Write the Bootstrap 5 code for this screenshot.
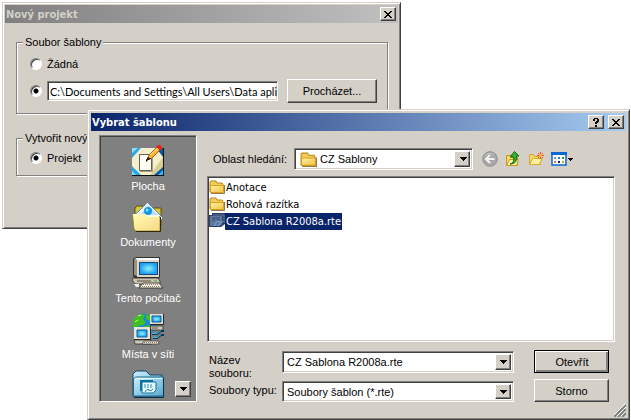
<!DOCTYPE html>
<html lang="cs">
<head>
<meta charset="utf-8">
<meta name="viewport" content="width=device-width, initial-scale=1">
<title>Vybrat šablonu</title>
<link href="https://cdn.jsdelivr.net/npm/bootstrap@5.3.0/dist/css/bootstrap.min.css" rel="stylesheet">
<style>
:root{--face:#d4d0c8;--shade:#808080;--dark:#404040;--navy:#0a246a}
body{background:#fff;color:#000;font:11px/14px "Liberation Sans",Arial,sans-serif}
.desktop{min-height:420px;padding:2px}
.win{background:var(--face);border:1px solid;border-color:var(--face) var(--dark) var(--dark) var(--face);box-shadow:inset 1px 1px #fff,inset -1px -1px var(--shade)}
.win-back{width:399px;max-width:100%;padding:2px 2px 52px}
.win-front{left:87px;right:1px;top:109px;padding:3px 3px 2px}
.titlebar{height:18px;padding:0 2px 0 1px;font:bold 11px/17px "DejaVu Sans Condensed","DejaVu Sans",sans-serif}
.win-back .titlebar{background:linear-gradient(90deg,#808080,#c0c0c0);color:var(--face)}
.win-front .titlebar{background:linear-gradient(90deg,#0a246a,#a6caf0);color:#fff}
.titlebar h1{font:inherit}
.face-btn{background:var(--face);color:#000;border:1px solid;border-color:#fff var(--dark) var(--dark) #fff;box-shadow:inset -1px -1px var(--shade);padding:0}
.cap-btn{width:16px;height:14px}
.push{height:24px;width:90px}
.group{border:1px solid var(--shade);box-shadow:1px 1px #fff,inset 1px 1px #fff;margin:0 10px 0 11px;padding:8px 10px 10px 13px}
.group legend{float:none;width:auto;font:inherit;line-height:14px;margin:0 0 0 -7px;padding:0 2px;background:var(--face)}
.group-file{margin-top:12px}
.group-new{margin-top:17px;padding-top:6px}
.radio-row{gap:5px;line-height:14px}
.radio-row .form-check-input{width:12px;height:12px;margin:0;border:1px solid;border-color:#808080 #fff #fff #808080;background-color:#fff;background-image:none;box-shadow:inset 1px 1px #404040;flex:none}
.radio-row .form-check-input:checked{background-image:radial-gradient(circle,#000 2px,transparent 3px)}
.sunken{background:#fff;border:1px solid;border-color:var(--shade) #fff #fff var(--shade);box-shadow:inset 1px 1px var(--dark),inset -1px -1px var(--face);border-radius:0;color:#000}
.path-box{height:20px;padding:0 0 0 2px;font:11px/14px Lato,"Liberation Sans",sans-serif;min-width:0;outline:0}
.places{width:98px;flex:none;background:var(--shade);border:1px solid;border-color:var(--shade) #fff #fff var(--shade);box-shadow:inset 1px 1px var(--dark);padding:9px 0 0;color:#fff}
.places a{color:#fff;line-height:14px;gap:2px;margin-bottom:8px}
.places a:last-of-type{margin-bottom:0}
.last-place{height:32px}
.scroll-down{width:16px;height:16px;right:5px;bottom:4px}
.dialog-body{padding:4px 11px 0 8px;gap:10px}
.look-in{margin-top:13px;padding-left:6px}
.look-in label{width:81px}
.combo{height:22px;padding:2px}
.combo select{appearance:none;border:0;outline:0;background:transparent;font:inherit;color:#000;padding:0 2px;min-width:0}
.combo-arrow{width:16px;flex:none}
.look-combo{flex:0 1 179px}
.look-combo svg{margin:0 1px 0 3px}
.tool{border:0;background:none;padding:0;line-height:0}
.tools{gap:7px;margin-left:9px}
.files{margin-top:6px;height:166px;padding:2px 1px 1px;font-family:"DejaVu Sans Condensed","DejaVu Sans",sans-serif}
.files li{height:17px;line-height:17px}
.files .caption{padding:0 1px}
.files .chosen{background:var(--navy);color:#fff}
.file-form{margin-top:8px;padding:0 6px 0 2px;gap:20px}
.fields{display:grid;grid-template-columns:73px minmax(0,1fr);grid-template-rows:30px 21px;padding-top:1px}
.fields label{line-height:13px;padding-top:3px}
.fields .combo{width:100%}
.fields div:last-child{height:21px}
.actions{gap:6px;width:75px}
.actions .push{width:100%;height:23px}
.actions .main-push{outline:1px solid #000;outline-offset:-1px;border-width:2px 1px 1px 2px;box-shadow:inset -2px -2px var(--shade)}
.grip{height:15px;padding-top:2px}
svg{display:block;flex:none}
</style>
<script src="https://cdn.jsdelivr.net/npm/bootstrap@5.3.0/dist/js/bootstrap.bundle.min.js"></script>
</head>
<body>
<svg width="0" height="0" class="position-absolute" aria-hidden="true">
<defs>
<linearGradient id="gold" x2="1" y2="1"><stop offset="0" stop-color="#fff5a8"/><stop offset="1" stop-color="#f0be40"/></linearGradient>
<linearGradient id="paperfold" x2="1" y2="1"><stop offset="0" stop-color="#fffcb0"/><stop offset="1" stop-color="#f8d888"/></linearGradient>
<linearGradient id="ice" x2="1" y2="1"><stop offset="0" stop-color="#cdf0fc"/><stop offset="1" stop-color="#58a8d0"/></linearGradient>
<radialGradient id="screen"><stop offset="0" stop-color="#8cf4ff"/><stop offset="1" stop-color="#20a0f0"/></radialGradient>
<symbol id="folder" viewBox="0 0 16 16"><path d="M1 13V3l1-1h5l1 2h5l1 1v8z" fill="#f4cf58" stroke="#b88518"/><path d="M1.500 13.500V6.500h13v7z" fill="url(#gold)" stroke="#d8a020"/><path d="M2 14.500h13.500V6" fill="none" stroke="#8c7a50"/></symbol>
<symbol id="down" viewBox="0 0 7 4"><path d="M0 0h7v1H6v1H5v1H4v1H3V3H2V2H1V1H0z"/></symbol>
<symbol id="close" viewBox="0 0 8 7"><path d="M0 0h2v1h1v1h2V1h1V0h2v1H7v1H6v1H5v1h1v1h1v1h1v1H6V6H5V5H3v1H2v1H0V6h1V5h1V4h1V3H2V2H1V1H0z"/></symbol>
</defs>
</svg>

<main class="desktop position-relative">
  <section class="win win-back" aria-label="Nový projekt">
    <header class="titlebar d-flex align-items-center justify-content-between">
      <h1 class="m-0">Nový projekt</h1>
      <button type="button" class="face-btn cap-btn d-flex align-items-center justify-content-center" aria-label="Zavřít"><svg width="8" height="7"><use href="#close"/></svg></button>
    </header>
    <form>
      <fieldset class="group group-file">
        <legend>Soubor šablony</legend>
        <div class="radio-row d-flex align-items-center mb-2">
          <input class="form-check-input" type="radio" name="template" id="none"><label for="none">Žádná</label>
        </div>
        <div class="radio-row d-flex align-items-center">
          <input class="form-check-input" type="radio" name="template" id="from-file" checked aria-label="Ze souboru">
          <input class="path-box sunken flex-fill" type="text" aria-label="Cesta k šabloně" value="C:\Documents and Settings\All Users\Data apli">
          <button type="button" class="face-btn push ms-1">Procházet...</button>
        </div>
      </fieldset>
      <fieldset class="group group-new">
        <legend>Vytvořit nový</legend>
        <div class="radio-row d-flex align-items-center">
          <input class="form-check-input" type="radio" name="kind" id="project" checked><label for="project">Projekt</label>
        </div>
      </fieldset>
    </form>
  </section>

  <section class="win win-front position-absolute" aria-label="Vybrat šablonu">
    <header class="titlebar d-flex align-items-center">
      <h1 class="m-0 me-auto">Vybrat šablonu</h1>
      <button type="button" class="face-btn cap-btn d-flex align-items-center justify-content-center me-1" aria-label="Nápověda"><svg width="6" height="9" viewBox="0 0 6 9"><path d="M1 0h4v1h1v3H5v1H4v1H2V4h1V3h1V1H2v2H0V1h1zM2 7h2v2H2z"/></svg></button>
      <button type="button" class="face-btn cap-btn d-flex align-items-center justify-content-center" aria-label="Zavřít"><svg width="8" height="7"><use href="#close"/></svg></button>
    </header>

    <div class="dialog-body d-flex">
      <nav class="places position-relative overflow-hidden" aria-label="Místa">
        <a href="#" class="d-flex flex-column align-items-center text-decoration-none">
          <svg width="32" height="32" viewBox="0 0 32 32"><path d="M0 3h32v28H0z" fill="#101010"/><path d="M0 3h31v27H0z" fill="#f4efc8"/><path d="M18 30L31 12v18z" fill="#d8cf98"/><path d="M0 3h9L0 13zM0 21l9 9H0z" fill="#28a8e8"/><path d="M0 3h6L0 8zM0 26l4 4H0z" fill="#88e0ff"/><path d="M24 3h7v9zM31 22v8h-9z" fill="#0858a8"/><path d="M31 25v5h-5z" fill="#30b8f0"/><path d="M7.500 9.500h12v16h-12z" fill="#fffef0" stroke="#606060"/><path d="M8 26.500h12.500V11" fill="none" stroke="#a8a078"/><path d="M15 15l2-5 8-8 3 3-8 8z" fill="#ffb030" stroke="#804000" stroke-width=".7"/><path d="M18 10l8-7" stroke="#fff080"/><path d="M24 2l2-2h2l2 2v2l-2 1z" fill="#e02820"/><path d="M14 17v-2l2-3 3 2-3 1z" fill="#181000"/></svg>
          <span>Plocha</span>
        </a>
        <a href="#" class="d-flex flex-column align-items-center text-decoration-none">
          <svg width="32" height="32" viewBox="0 0 32 32"><path d="M3 14V7l2-2h6l2 2h16v18z" fill="#d8c838" stroke="#605000"/><path d="M15.500 1.500L31 17l-6 6L4 13z" fill="#eef8ff" stroke="#6888b8"/><path d="M16 4l10 10H8z" fill="#b8dcf8"/><circle cx="16" cy="10" r="4" fill="#1898e0"/><circle cx="15" cy="9" r="1.500" fill="#80e0ff"/><path d="M.5 13.500h13l2 2H28V30H4l-2-2z" fill="url(#paperfold)" stroke="#908000" stroke-width=".7"/><path d="M1 13.500h12.500l2 2H27" fill="none" stroke="#ffffd8"/><path d="M4 30.500h24.500V16" fill="none" stroke="#302800"/></svg>
          <span>Dokumenty</span>
        </a>
        <a href="#" class="d-flex flex-column align-items-center text-decoration-none">
          <svg width="32" height="32" viewBox="0 0 32 32"><path d="M1 2l3-2h24v20l-2 2H4l-3-3z" fill="#303030"/><path d="M2 2h3v17l-3-1z" fill="#989080"/><path d="M3 1h24v2H5z" fill="#fff"/><path d="M5 3h22v17H5z" fill="#dcd8cc"/><path d="M7 5h19v13H7z" fill="#184878"/><path d="M8 6h17v11H8z" fill="url(#screen)"/><path d="M1 21h25l2 3v3H3l-3-4z" fill="#c8c0b0" stroke="#302820" stroke-width=".8"/><path d="M5 24h14" stroke="#585040"/><path d="M22 24h3" stroke="#18c030"/><path d="M2 27h5v3H4z" fill="#eee"/><path d="M11 26h16l4 5H7z" fill="#f0ece0" stroke="#302820" stroke-width=".8"/><path d="M11 27.500h16M10 29.500h18" stroke="#888070" stroke-dasharray="1 1"/></svg>
          <span>Tento počítač</span>
        </a>
        <a href="#" class="d-flex flex-column align-items-center text-decoration-none">
          <svg width="32" height="32" viewBox="0 0 32 32"><circle cx="12" cy="12" r="11.500" fill="#1888d8"/><path d="M3 4l6-3 4 1-2 4 3 3-4 4-3-1-2 4-4-2V8zM14 1l5 2-1 5-4-2zM12 13l6-1 3 4-3 5-6-4z" fill="#40c020"/><path d="M6 3l3-1M3 9l3-2" stroke="#c0ff80"/><path d="M18 1h14v11H18z" fill="#282828"/><path d="M18 1h13v10H18z" fill="#e0dcd0"/><path d="M20 3h9v6h-9z" fill="url(#screen)" stroke="#1060a0"/><path d="M18 13h13v4H18z" fill="#d0c8b8" stroke="#303030" stroke-width=".8"/><path d="M20 15h6" stroke="#605848"/><path d="M20 21h5l4-3h3M21 25h4l4-3h3" fill="none" stroke="#083850" stroke-width="2"/><path d="M20 20.500h5l4-3M21 24.500h4l4-3" fill="none" stroke="#48b8e0"/><path d="M2 14h17v13H2z" fill="#282828"/><path d="M2 14h16v12H2z" fill="#e8e4d8"/><path d="M5 17h10v7H5z" fill="url(#screen)" stroke="#1060a0"/><path d="M2 27h17l1 4H3z" fill="#d0c8b8" stroke="#303030" stroke-width=".8"/><path d="M12 28h14l1 3H10z" fill="#f0ece0" stroke="#403830" stroke-width=".7"/><path d="M12 29.500h13" stroke="#807868" stroke-dasharray="1 1"/></svg>
          <span>Místa v síti</span>
        </a>
        <a href="#" class="last-place d-flex flex-column align-items-center" aria-label="Šablony">
          <svg width="32" height="32" viewBox="0 0 32 32"><path d="M1 27V5l3-3h10l4 4h12v21z" fill="url(#ice)" stroke="#104868"/><path d="M1.500 26V10l2-2h28v19H1.500z" fill="url(#ice)" stroke="#186890"/><path d="M3 9.500h27" stroke="#e8fcff"/><path d="M2 28.500h29.500V9" fill="none" stroke="#083048"/><path d="M8 11h13v11H8z" fill="#1070a0"/><path d="M10 13h14v8l-3 3H10z" fill="#e4f8ff" stroke="#1070a0"/><path d="M12 16h9M12 18h9" stroke="#3890b8" stroke-dasharray="2 1"/><path d="M13 23q2-4 4-2t4-1" stroke="#2080b0" fill="none"/></svg>
        </a>
        <button type="button" class="scroll-down face-btn position-absolute d-flex align-items-center justify-content-center" aria-label="Dolů"><svg width="7" height="4"><use href="#down"/></svg></button>
      </nav>

      <div class="flex-fill">
        <div class="look-in d-flex align-items-center">
          <label for="look">Oblast hledání:</label>
          <div class="combo look-combo sunken d-flex align-items-center">
            <svg width="17" height="17"><use href="#folder"/></svg>
            <select id="look" class="flex-fill"><option>CZ Sablony</option></select>
            <span class="combo-arrow face-btn align-self-stretch d-flex align-items-center justify-content-center"><svg width="7" height="4"><use href="#down"/></svg></span>
          </div>
          <div class="tools d-flex align-items-center">
            <button type="button" class="tool" aria-label="Zpět"><svg width="16" height="16" viewBox="0 0 16 16"><circle cx="8" cy="8" r="7.300" fill="#a8a8a8" stroke="#909090"/><path d="M3 5a6 6 0 0 1 9-1" fill="none" stroke="#c8c8c8"/><path d="M12.500 8H4.500M8 4L4 8l4 4" fill="none" stroke="#f4f4f4" stroke-width="2"/></svg></button>
            <button type="button" class="tool" aria-label="O úroveň výš"><svg width="16" height="16" viewBox="0 0 16 16"><path d="M1.500 14.500v-10h4l1 2h6v8z" fill="#f8dc68" stroke="#c89820"/><path d="M1.500 14.500l3-6h9l-2 6z" fill="#fff0a0" stroke="#c89820"/><path d="M5 13c4-1 4-4 3.500-7H5l4.500-5.500L14 5h-2.500C12 9 11 13 5 13z" fill="#38b030" stroke="#106810"/></svg></button>
            <button type="button" class="tool" aria-label="Nová složka"><svg width="16" height="16" viewBox="0 0 16 16"><path d="M1.500 13.500v-10h4l1 2h6v8z" fill="#f8dc68" stroke="#d8a830"/><path d="M1.500 13.500l3-6h9.500l-2.500 6z" fill="#fff0a0" stroke="#d8a830"/><path d="M12.500 1v7M9 4.500h7M10 2l5 5M15 2l-5 5" stroke="#f05020"/><circle cx="12.500" cy="4.500" r="1.500" fill="#ffd060"/></svg></button>
            <button type="button" class="tool" aria-label="Zobrazení"><svg width="23" height="16" viewBox="0 0 23 16"><path d="M1 2h14v12H1z" fill="#fff" stroke="#0868d0" stroke-width="1.500"/><path d="M0 1h16v3H0z" fill="#0868d0"/><path d="M3 6h2v2H3z" fill="#9090c0"/><path d="M7 6h2v2H7z" fill="#3078d0"/><path d="M11 6h2v2h-2z" fill="#20a030"/><path d="M3 10h2v2H3z" fill="#f07050"/><path d="M7 10h2v2H7z" fill="#102080"/><path d="M11 10h2v2h-2z" fill="#c8a010"/><path d="M17 7h5v1h-1v1h-1v1h-1V9h-1V8h-1z"/></svg></button>
          </div>
        </div>

        <ul class="files sunken list-unstyled mb-0">
          <li class="d-flex"><svg width="16" height="16"><use href="#folder"/></svg><span class="caption">Anotace</span></li>
          <li class="d-flex"><svg width="16" height="16"><use href="#folder"/></svg><span class="caption">Rohová razítka</span></li>
          <li class="d-flex"><svg width="16" height="16" viewBox="0 0 16 16"><path d="M0 2h3V0h13v11l-4 3H0z" fill="#303f68"/><path d="M1 3h12v8l-3 2H1z" fill="#6078a0"/><path d="M4 2h11v8" fill="none" stroke="#6878a0"/><path d="M3 5h8M3 7h3M8 7h3" stroke="#304878"/><path d="M6 13c0-5 5-6 6-3l2-2M9 13c0-2 2-3 3-1" stroke="#78b0d8" fill="none"/></svg><span class="caption chosen">CZ Sablona R2008a.rte</span></li>
        </ul>

        <form class="file-form d-flex">
          <div class="fields flex-fill">
            <label for="fname">Název<br>souboru:</label>
            <div class="combo sunken d-flex align-items-center">
              <select id="fname" class="flex-fill"><option>CZ Sablona R2008a.rte</option></select>
              <span class="combo-arrow face-btn align-self-stretch d-flex align-items-center justify-content-center"><svg width="7" height="4"><use href="#down"/></svg></span>
            </div>
            <label for="ftype">Soubory typu:</label>
            <div class="combo sunken d-flex align-items-center">
              <select id="ftype" class="flex-fill"><option>Soubory šablon (*.rte)</option></select>
              <span class="combo-arrow face-btn align-self-stretch d-flex align-items-center justify-content-center"><svg width="7" height="4"><use href="#down"/></svg></span>
            </div>
          </div>
          <div class="actions d-flex flex-column">
            <button type="button" class="face-btn push main-push">Otevřít</button>
            <button type="button" class="face-btn push">Storno</button>
          </div>
        </form>
      </div>
    </div>
    <div class="grip d-flex justify-content-end"><svg width="12" height="13" viewBox="0 0 12 13"><path d="M0 13L12 1M4 13l8-8M8 13l4-4" stroke="#808080" stroke-width="2"/><path d="M-1 12L11 0M3 12l9-9M7 12l5-5" stroke="#fff"/></svg></div>
  </section>
</main>
</body>
</html>
